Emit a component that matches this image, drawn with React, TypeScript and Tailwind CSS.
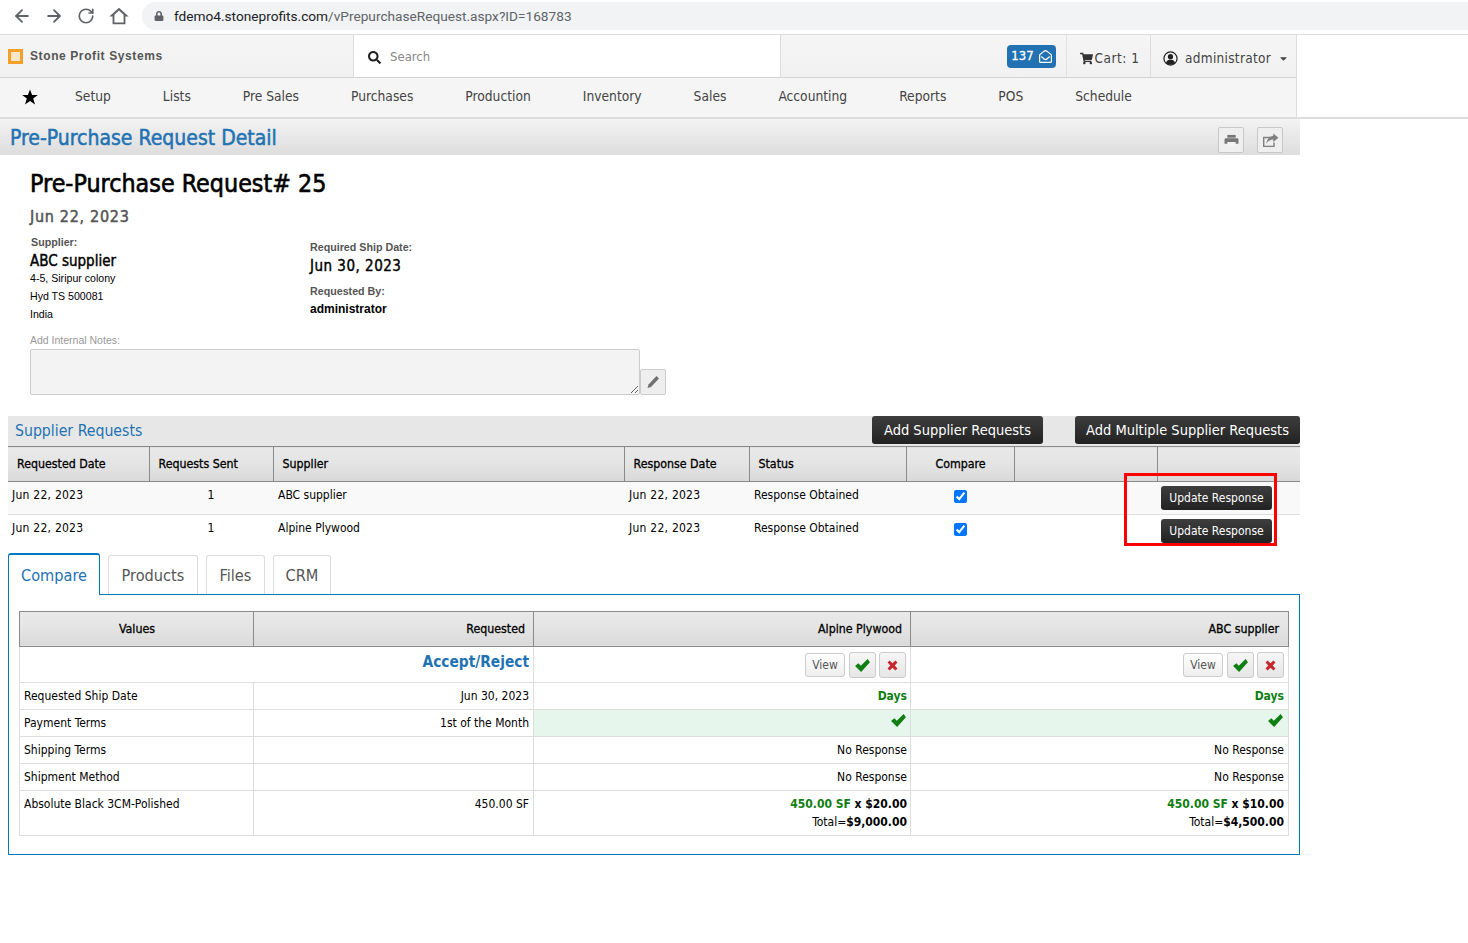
import { ArrowLeft, ArrowRight, RotateCw } from "lucide-react";
import { FaLock, FaShoppingCart, FaSearch, FaRegEnvelopeOpen, FaCaretDown } from "react-icons/fa";

const navItems = ["Setup", "Lists", "Pre Sales", "Purchases", "Production", "Inventory", "Sales", "Accounting", "Reports", "POS", "Schedule"];

const thClass =
  "border-r border-[#8a8a8a] last:border-r-0 bg-gradient-to-b from-[#e9e9e9] via-[#e4e4e4] to-[#d9d9d9] text-[12.3px] font-normal [-webkit-text-stroke:0.3px_black] text-black h-[35px] p-0 pl-[9px] pr-2";

const cellText = "text-[12px] text-black";

function OkIcon({ className }: { className: string }) {
  return (
    <svg viewBox="0 0 16 14" className={className} fill="currentColor">
      <path d="M0 7.5 L3.5 4.5 L6.2 7.2 L13.5 0 L16 3.5 L6.5 14 Z" />
    </svg>
  );
}

function RemoveIcon({ className }: { className: string }) {
  return (
    <svg viewBox="0 0 12 12" className={className} fill="currentColor">
      <path d="M2.8 0.6 L6 3.6 L9.2 0.6 L11.4 2.8 L8.4 6 L11.4 9.2 L9.2 11.4 L6 8.4 L2.8 11.4 L0.6 9.2 L3.6 6 L0.6 2.8 Z" />
    </svg>
  );
}

function PrintIcon() {
  return (
    <svg viewBox="0 0 16 14" className="h-[13px] w-[15px] text-[#777777]" fill="currentColor">
      <path d="M3.5 1 H12.5 V4 H3.5 Z" />
      <path d="M2 4.5 H14 Q15.5 4.5 15.5 6 V10.5 H12.5 V8.5 H3.5 V10.5 H0.5 V6 Q0.5 4.5 2 4.5 Z" />
      <path d="M4.5 9.5 H11.5 V13 H4.5 Z" fill="#f4f4f4" />
    </svg>
  );
}

function ShareIcon() {
  return (
    <svg viewBox="0 0 18 16" className="h-[15px] w-[17px] text-[#808080]" fill="currentColor">
      <path d="M1 4 H9 V5.5 H2.5 V13.5 H12 V10 H13.5 V15 H1 Z" />
      <path d="M12 0.5 L17.5 5 L12 9.5 V7 C8.5 7 6 8.5 4.5 11.5 C5 6.5 8 3.5 12 3 Z" />
    </svg>
  );
}

function UserIcon() {
  return (
    <svg viewBox="0 0 16 16" className="h-[15px] w-[15px] text-[#222222]">
      <circle cx="8" cy="8" r="7" fill="none" stroke="currentColor" strokeWidth="1.3" />
      <circle cx="8" cy="6" r="2.8" fill="currentColor" />
      <path d="M3.2 12.5 C4 10 6 9.4 8 9.4 C10 9.4 12 10 12.8 12.5 C11.5 14 10 14.6 8 14.6 C6 14.6 4.5 14 3.2 12.5 Z" fill="currentColor" />
    </svg>
  );
}

function RequestRow({ supplier, striped }: { supplier: string; striped?: boolean }) {
  return (
    <tr className={`h-[33px] border-b border-[#dddddd] align-top ${cellText} last:border-b-0 ${striped ? "bg-[#f9f9f9]" : "bg-white"}`}>
      <td className="px-1 pt-[4px] tracking-[0.25px]">Jun 22, 2023</td>
      <td className="pt-[4px] text-center">1</td>
      <td className="pl-[5px] pt-[4px]">{supplier}</td>
      <td className="pl-[5px] pt-[4px] tracking-[0.25px]">Jun 22, 2023</td>
      <td className="pl-[5px] pt-[4px]">Response Obtained</td>
      <td className="pt-[8px] text-center">
        <input type="checkbox" defaultChecked className="mx-auto block h-[13px] w-[13px] accent-[#0075ff]" />
      </td>
      <td />
      <td className="pr-[28px] pt-[4px] text-right">
        <button className="ml-auto block h-6 w-[111px] rounded-[3px] bg-gradient-to-b from-[#3e3e3e] to-[#222222] text-center text-[12px] text-white">
          Update Response
        </button>
      </td>
    </tr>
  );
}

function DecisionCell() {
  return (
    <td className="border-r border-[#dddddd] p-0 pr-[4px] pt-[2px] last:border-r-0">
      <div className="flex items-center justify-end gap-[3px]">
        <button className="mr-px h-6 w-[40px] rounded-[3px] border border-[#cccccc] bg-gradient-to-b from-white to-[#eeeeee] text-[12px] text-[#555555]">View</button>
        <button className="flex h-[26px] w-[27px] items-center justify-center rounded-[3px] border border-[#cccccc] bg-gradient-to-b from-[#f6f6f6] to-[#e6e6e6]">
          <OkIcon className="h-[13px] w-[15px] text-[#0f7f12]" />
        </button>
        <button className="flex h-[26px] w-[27px] items-center justify-center rounded-[3px] border border-[#cccccc] bg-gradient-to-b from-[#f6f6f6] to-[#e6e6e6]">
          <RemoveIcon className="h-[11px] w-[11px] text-[#c9252d]" />
        </button>
      </div>
    </td>
  );
}

function CompareRow({ label, requested, cell, green }: { label: string; requested?: string; cell: React.ReactNode; green?: boolean }) {
  return (
    <tr className={`h-[27px] border-b border-[#dddddd] align-top ${cellText}`}>
      <td className="border-r border-[#dddddd] px-1 pt-[4px]">{label}</td>
      <td className="border-r border-[#dddddd] px-1 pt-[4px] text-right">{requested}</td>
      <td className={`border-r border-[#dddddd] pl-1 pr-[3px] pt-[4px] text-right ${green ? "bg-[#e6f6ec]" : ""}`}>{cell}</td>
      <td className={`px-1 pt-[4px] text-right ${green ? "bg-[#e6f6ec]" : ""}`}>{cell}</td>
    </tr>
  );
}

function Price({ unit, total }: { unit: string; total: string }) {
  return (
    <div className="leading-[18px]">
      <div className="font-bold">
        <span className="text-[#0f7f12]">450.00 SF</span> x {unit}
      </div>
      <div>
        Total=<span className="font-bold">{total}</span>
      </div>
    </div>
  );
}

export default function App() {
  return (
    <div className="min-h-[943px] bg-white font-['DejaVu_Sans',sans-serif] [font-stretch:condensed]">
      {/* Browser chrome */}
      <div className="flex h-[35px] items-start border-b border-[#dadce0] pt-[2px] font-['Roboto',sans-serif] [font-stretch:normal]">
        <div className="flex h-7 w-[142px] items-center gap-[12px] pl-[12px] text-[#5f6368]">
          <ArrowLeft className="h-5 w-5" strokeWidth={2.2} />
          <ArrowRight className="h-5 w-5" strokeWidth={2.2} />
          <RotateCw className="h-5 w-5 p-[1px]" strokeWidth={2.2} />
          <svg viewBox="0 0 24 24" className="h-[22px] w-[22px]" fill="currentColor">
            <path d="M12 3 L1.5 12.5 H5 V21 H19 V12.5 H22.5 Z M12 6 L17 10.5 V19 H7 V10.5 Z" fillRule="evenodd" />
          </svg>
        </div>
        <div className="flex h-7 flex-1 items-center gap-[10px] rounded-l-full bg-[#f1f3f4] pl-[12px] text-[13.66px] text-[#5f6368]">
          <FaLock className="h-[10px] w-[10px]" />
          <span>
            <span className="text-[#202124]">fdemo4.stoneprofits.com</span>/vPrepurchaseRequest.aspx?ID=168783
          </span>
        </div>
      </div>

      {/* App header */}
      <div className="w-[1297px] border-r border-[#dddddd]">
        <div className="flex h-[43px] border-b border-[#d4d4d4] bg-gradient-to-b from-[#f5f5f5] to-[#f1f1f1]">
          <div className="flex w-[354px] items-center gap-[7px] border-r border-[#dddddd] pl-2">
            <span className="h-[15px] w-[15px] border-[3px] border-[#f6a02c] bg-[#fbe6c6]" />
            <span className="font-['Liberation_Sans',sans-serif] text-[12px] font-bold tracking-[0.6px] text-[#555555]">Stone Profit Systems</span>
          </div>
          <div className="flex w-[427px] items-center border-r border-[#dddddd] bg-white pl-[14px] pt-px">
            <FaSearch className="mt-[2px] h-[13px] w-[13px] text-[#222222]" />
            <span className="ml-[9px] text-[13px] text-[#888888]">Search</span>
          </div>
          <div className="flex flex-1 items-center justify-end text-[13.5px] text-[#444444]">
            <div className="flex h-full items-center border-r border-[#e2e2e2] pr-[10px]">
              <span className="flex h-[23px] w-[49px] items-center justify-center gap-[5px] rounded-[4px] bg-[#2272b3] text-[13px] text-white [-webkit-text-stroke:0.3px_white]">
                137 <FaRegEnvelopeOpen className="h-[13px] w-[13px]" />
              </span>
            </div>
            <div className="flex h-full w-[84px] items-center justify-center gap-[2px] border-r border-[#dddddd] pl-[2px] pt-[4px]">
              <FaShoppingCart className="h-[13px] w-[13px] text-[#333333]" />
              <span className="tracking-[0.5px]">Cart: 1</span>
            </div>
            <div className="flex h-full w-[145px] items-center pl-[12px] pt-[4px]">
              <UserIcon />
              <span className="ml-[7px] tracking-[0.3px]">administrator</span>
              <FaCaretDown className="ml-[7px] h-[11px] w-[11px] text-[#444444]" />
            </div>
          </div>
        </div>
        <nav className="flex h-[39px] items-center gap-[52px] bg-[#f5f5f5] pb-[2px] pl-[22px] text-[13.7px] text-[#444444]">
          <svg viewBox="0 0 16 16" className="mr-[-15px] h-[16px] w-[16px] text-black" fill="currentColor">
            <path d="M8 0.5 L10.1 6 L15.8 6 L11.2 9.6 L13 15.4 L8 11.9 L3 15.4 L4.8 9.6 L0.2 6 L5.9 6 Z" />
          </svg>
          {navItems.map((item) => (
            <span key={item}>{item}</span>
          ))}
        </nav>
      </div>

      {/* Title bar */}
      <div className="border-t-[2px] border-[#dddddd]">
        <div className="flex h-[36px] w-[1300px] items-center justify-between bg-gradient-to-b from-[#f3f3f3] to-[#dddddd] pl-[10px] pr-[17px]">
          <h1 className="pt-[3px] text-[21px] font-normal leading-none text-[#2272b3] [-webkit-text-stroke:0.5px_#2272b3]">Pre-Purchase Request Detail</h1>
          <div className="flex gap-[13px] pt-[6px]">
            <button className="flex h-[26px] w-[26px] items-center justify-center rounded-[2px] border border-[#c8c8c8] bg-[#efefef]">
              <PrintIcon />
            </button>
            <button className="flex h-[26px] w-[26px] items-center justify-center rounded-[2px] border border-[#c8c8c8] bg-[#efefef]">
              <ShareIcon />
            </button>
          </div>
        </div>
      </div>

      {/* Request summary */}
      <div className="w-[1300px] pl-[30px]">
        <h2 className="mt-[14px] text-[24.8px] font-normal leading-[30px] text-black [-webkit-text-stroke:0.6px_black]">Pre-Purchase Request# 25</h2>
        <div className="mt-[8px] text-[16px] font-normal leading-5 tracking-[0.7px] text-[#555555] [-webkit-text-stroke:0.5px_#555555]">Jun 22, 2023</div>
        <div className="mt-[8px] flex font-['Liberation_Sans',sans-serif]">
          <div className="w-[280px]">
            <div className="pl-px text-[10.7px] font-bold leading-[14px] text-[#555555]">Supplier:</div>
            <div className="mt-[2px] font-['DejaVu_Sans',sans-serif] text-[15px] font-normal leading-5 text-black [-webkit-text-stroke:0.4px_black]">ABC supplier</div>
            <div className="mt-[-2px] text-[10.6px] leading-[18px] text-black">4-5, Siripur colony</div>
            <div className="text-[10.6px] leading-[18px] text-black">Hyd TS 500081</div>
            <div className="text-[10.6px] leading-[18px] text-black">India</div>
          </div>
          <div className="pt-[5px]">
            <div className="text-[10.7px] font-bold leading-[14px] text-[#555555]">Required Ship Date:</div>
            <div className="mt-[2px] font-['DejaVu_Sans',sans-serif] text-[15px] font-normal leading-5 tracking-[0.5px] text-black [-webkit-text-stroke:0.4px_black]">Jun 30, 2023</div>
            <div className="mt-[8px] text-[10.7px] font-bold leading-[14px] text-[#555555]">Requested By:</div>
            <div className="mt-[4px] text-[12px] font-bold leading-[15px] text-black">administrator</div>
          </div>
        </div>
        <div className="mt-[10px] font-['Liberation_Sans',sans-serif] text-[10.5px] leading-[14px] text-[#999999]">Add Internal Notes:</div>
        <div className="mt-[2px] flex items-end">
          <textarea readOnly className="block h-[46px] w-[610px] rounded-[2px] border border-[#cccccc] bg-[#f3f3f3]" />
          <button className="flex h-[26px] w-[26px] items-center justify-center rounded-[2px] border border-[#cccccc] bg-[#eeeeee]">
            <svg viewBox="0 0 14 14" className="h-[14px] w-[14px] text-[#707070]" fill="currentColor">
              <path d="M10.5 1 L13 3.5 L5 12 L1.5 13 L2.5 9.5 Z" />
            </svg>
          </button>
        </div>
      </div>

      {/* Supplier requests */}
      <div className="ml-2 mt-[21px] w-[1292px]">
        <div className="flex h-[30px] items-center bg-[#e7e7e7] pl-[7px]">
          <span className="text-[15.7px] text-[#2272b3]">Supplier Requests</span>
          <button className="mb-[2px] ml-auto h-[28px] w-[171px] rounded-[3px] bg-gradient-to-b from-[#3e3e3e] to-[#222222] pt-px text-[14.5px] text-white">Add Supplier Requests</button>
          <button className="mb-[2px] ml-[32px] h-[28px] w-[225px] rounded-[3px] bg-gradient-to-b from-[#3e3e3e] to-[#222222] pt-px text-[14.5px] text-white">Add Multiple Supplier Requests</button>
        </div>
        <div className="relative">
          <table className="w-full table-fixed border-collapse text-left">
            <colgroup>
              <col className="w-[141px]" />
              <col className="w-[124px]" />
              <col className="w-[351px]" />
              <col className="w-[125px]" />
              <col className="w-[157px]" />
              <col className="w-[108px]" />
              <col className="w-[143px]" />
              <col className="w-[143px]" />
            </colgroup>
            <thead>
              <tr className="border-y border-[#8a8a8a]">
                <th className={thClass}>Requested Date</th>
                <th className={thClass}>Requests Sent</th>
                <th className={thClass}>Supplier</th>
                <th className={thClass}>Response Date</th>
                <th className={thClass}>Status</th>
                <th className={`${thClass} text-center`}>Compare</th>
                <th className={thClass} />
                <th className={thClass} />
              </tr>
            </thead>
            <tbody>
              <RequestRow supplier="ABC supplier" striped />
              <RequestRow supplier="Alpine Plywood" />
            </tbody>
          </table>
          {/* red annotation from the screenshot */}
          <div className="pointer-events-none absolute left-[1116px] top-[27px] h-[73px] w-[153px] border-[3px] border-[#ff0000]" />
        </div>
      </div>

      {/* Tabs */}
      <div className="ml-2 mt-[5px] w-[1292px]">
        <div className="flex h-[41px] items-end gap-2 text-[16.2px]">
          <div className="-mb-px flex h-[42px] w-[92px] items-center justify-center rounded-t-[3px] border border-b-0 border-t-[2px] border-[#0079c1] bg-white pt-[3px] text-[#2272b3]">Compare</div>
          <div className="flex h-[39px] w-[90px] items-center justify-center rounded-t-[3px] border border-b-0 border-[#dddddd] pt-[3px] text-[#555555]">Products</div>
          <div className="flex h-[39px] w-[59px] items-center justify-center rounded-t-[3px] border border-b-0 border-[#dddddd] pt-[3px] text-[#555555]">Files</div>
          <div className="flex h-[39px] w-[58px] items-center justify-center rounded-t-[3px] border border-b-0 border-[#dddddd] pt-[3px] text-[#555555]">CRM</div>
        </div>
        <div className="h-[261px] border border-[#0079c1] px-[10px] pt-[16px]">
          <table className="w-[1269px] table-fixed border-collapse border border-[#dddddd] text-left">
            <colgroup>
              <col className="w-[234px]" />
              <col className="w-[280px]" />
              <col className="w-[377px]" />
              <col className="w-[378px]" />
            </colgroup>
            <thead>
              <tr className="border border-[#8a8a8a]">
                <th className={`${thClass} pt-[2px] text-center`}>Values</th>
                <th className={`${thClass} pt-[2px] text-right`}>Requested</th>
                <th className={`${thClass} pt-[2px] text-right`}>Alpine Plywood</th>
                <th className={`${thClass} pr-[9px] pt-[2px] text-right`}>ABC supplier</th>
              </tr>
            </thead>
            <tbody>
              <tr className="h-[36px] border-b border-[#dddddd]">
                <td className="border-r-0" />
                <td className="border-r border-[#dddddd] px-1 pb-[4px] text-right text-[15.3px] font-bold text-[#2272b3]">Accept/Reject</td>
                <DecisionCell />
                <DecisionCell />
              </tr>
              <CompareRow label="Requested Ship Date" requested="Jun 30, 2023" cell={<span className="font-bold text-[#0f7f12]">Days</span>} />
              <CompareRow label="Payment Terms" requested="1st of the Month" green cell={<OkIcon className="ml-auto mr-[1px] h-[13px] w-[15px] text-[#0f7f12]" />} />
              <CompareRow label="Shipping Terms" cell="No Response" />
              <CompareRow label="Shipment Method" cell="No Response" />
              <tr className={`h-[45px] align-top ${cellText}`}>
                <td className="border-r border-[#dddddd] px-1 pt-[4px] leading-[18px]">Absolute Black 3CM-Polished</td>
                <td className="border-r border-[#dddddd] px-1 pt-[4px] text-right leading-[18px]">450.00 SF</td>
                <td className="border-r border-[#dddddd] pl-1 pr-[3px] pt-[4px] text-right">
                  <Price unit="$20.00" total="$9,000.00" />
                </td>
                <td className="px-1 pt-[4px] text-right">
                  <Price unit="$10.00" total="$4,500.00" />
                </td>
              </tr>
            </tbody>
          </table>
        </div>
      </div>
    </div>
  );
}
